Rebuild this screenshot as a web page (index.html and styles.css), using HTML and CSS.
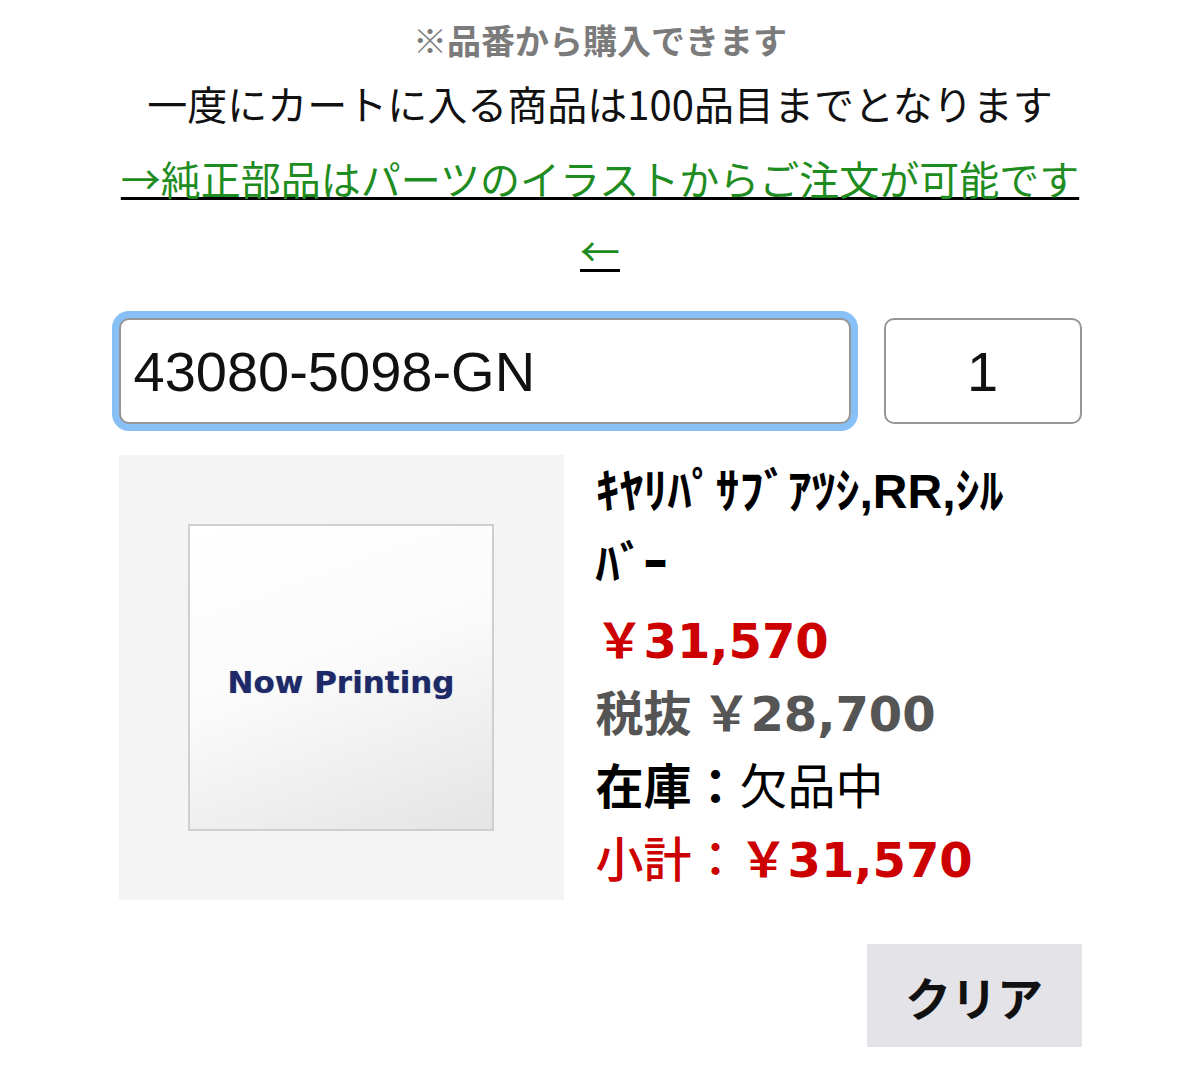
FILE: index.html
```html
<!DOCTYPE html>
<html lang="ja">
<head>
<meta charset="utf-8">
<title>品番から購入</title>
<link rel="stylesheet" href="styles.css">
</head>
<body>
<div class="page">
  <p class="note">※品番から購入できます</p>
  <p class="limit">一度にカートに入る商品は100品目までとなります</p>
  <p class="guide"><a href="#">→純正部品はパーツのイラストからご注文が可能です←</a></p>

  <div class="entry">
    <input class="code" type="text" value="43080-5098-GN">
    <input class="qty" type="text" value="1">
  </div>

  <div class="product">
    <div class="thumb">
      <div class="thumb-inner"><span class="np">Now Printing</span></div>
    </div>
    <div class="info">
      <div class="name">ｷﾔﾘﾊﾟｻﾌﾞｱﾂｼ,RR,ｼﾙﾊﾞｰ</div>
      <div class="price"><span class="num">￥31,570</span></div>
      <div class="excl">税抜 <span class="num">￥28,700</span></div>
      <div class="stock"><span class="label">在庫：</span>欠品中</div>
      <div class="subtotal"><span class="label">小計：</span><span class="num">￥31,570</span></div>
    </div>
  </div>

  <div class="actions">
    <button class="clear" type="button">クリア</button>
  </div>
</div>
</body>
</html>
```
FILE: styles.css
```css
html, body {
  margin: 0;
  padding: 0;
  background: #ffffff;
}

body {
  font-family: "Noto Sans CJK JP", sans-serif;
  color: #111;
}

.page {
  width: 963px;
  margin: 0 auto;
  padding-top: 15px;
}

.note {
  margin: 0;
  font-size: 34px;
  line-height: 50px;
  font-weight: 700;
  color: #7b7b7b;
  text-align: center;
}

.limit {
  margin: 8px 0 0;
  font-size: 40px;
  line-height: 60px;
  font-weight: 400;
  color: #111;
  text-align: center;
}

.guide {
  margin: 9px 0 0;
  font-size: 40px;
  line-height: 72px;
  text-align: center;
}

.guide a {
  color: #1f8c1f;
  text-decoration: underline;
  text-decoration-color: #000;
  text-decoration-thickness: 3px;
  text-underline-offset: 2px;
}

.entry {
  display: flex;
  gap: 33px;
  margin-top: 32px;
}

.code,
.qty {
  box-sizing: border-box;
  height: 106px;
  margin: 0;
  border: 2px solid #969696;
  border-radius: 10px;
  background: #fff;
  color: #111;
  font-family: "Liberation Sans", sans-serif;
  font-size: 56px;
  outline: none;
}

.code {
  width: 732px;
  padding: 0 0 0 13px;
  box-shadow: 0 0 0 7px #86c0f6;
}

.qty {
  width: 198px;
  padding: 0;
  text-align: center;
}

.product {
  display: flex;
  gap: 32px;
  margin-top: 31px;
}

.thumb {
  flex: none;
  width: 445px;
  height: 445px;
  background: #f4f4f4;
  display: flex;
  align-items: center;
  justify-content: center;
}

.thumb-inner {
  box-sizing: border-box;
  width: 306px;
  height: 307px;
  border: 2px solid #cfcfcf;
  background: linear-gradient(160deg, #ffffff 0%, #fbfbfb 45%, #e4e4e4 100%);
  display: flex;
  align-items: center;
  justify-content: center;
  padding-top: 8px;
}

.np {
  font-family: "DejaVu Sans", sans-serif;
  font-weight: 700;
  font-size: 31px;
  color: #1e2a68;
  text-shadow: 0 0 1px rgba(30, 42, 104, 0.5);
}

.info {
  flex: 1;
  font-size: 48px;
  line-height: 73px;
}

.name {
  max-width: 440px;
  font-family: "Liberation Sans", "Noto Sans CJK JP", sans-serif;
  font-weight: 700;
  color: #000;
}

.num {
  font-family: "DejaVu Sans", "Noto Sans CJK JP", sans-serif;
  font-weight: 700;
  line-height: 48px;
}

.label {
  line-height: 48px;
}

.price {
  color: #cc0000;
}

.excl {
  color: #555;
  font-weight: 700;
}

.stock {
  color: #000;
}

.stock .label {
  font-weight: 700;
}

.subtotal {
  color: #cc0000;
}

.subtotal .label {
  font-weight: 500;
}

.actions {
  display: flex;
  justify-content: flex-end;
  margin-top: 44px;
}

.clear {
  width: 215px;
  height: 103px;
  border: none;
  border-radius: 0;
  background: #e3e3e8;
  color: #111;
  font-family: "Noto Sans CJK JP", sans-serif;
  font-size: 46px;
  font-weight: 700;
  padding: 0;
}
```
